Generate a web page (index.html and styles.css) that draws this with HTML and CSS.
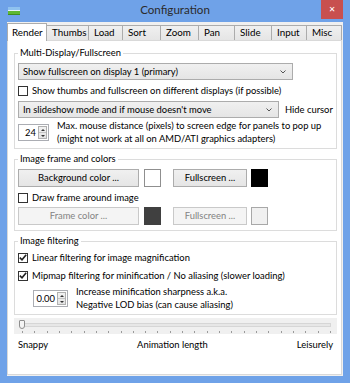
FILE: index.html
```html
<!DOCTYPE html>
<html lang="en">
<head>
    <meta charset="UTF-8">
    <title>Configuration</title>
    <link rel="stylesheet" href="styles.css">
</head>
<body>
    <div class="window">
        <div class="titlebar">
            <svg class="app-icon" width="12" height="8" viewBox="0 0 12 8">
                <rect x="0" y="0" width="12" height="4" fill="#8fc2ef"/>
                <rect x="0" y="3" width="12" height="1" fill="#e8f2fb"/>
                <rect x="0" y="4" width="12" height="4" fill="#5fb832"/>
                <rect x="0" y="7" width="12" height="1" fill="#3f8d1e"/>
            </svg>
            <div class="title">Configuration</div>
            <div class="close">&#x2715;</div>
        </div>

        <div class="client">
            <div class="tabs">
                <div class="tab active">Render</div>
                <div class="tab">Thumbs</div>
                <div class="tab">Load</div>
                <div class="tab">Sort</div>
                <div class="tab">Zoom</div>
                <div class="tab">Pan</div>
                <div class="tab">Slide</div>
                <div class="tab">Input</div>
                <div class="tab">Misc</div>
            </div>

            <div class="page">
                <!-- Multi display -->
                <fieldset class="group">
                    <legend>Multi-Display/Fullscreen</legend>
                    <div class="select select-wide">
                        <span>Show fullscreen on display 1 (primary)</span>
                        <svg class="chevron" width="6" height="4" viewBox="0 0 6 4"><path d="M0.5 0.5 L3 3 L5.5 0.5" fill="none" stroke="#555" stroke-width="1"/></svg>
                    </div>
                    <div class="check">
                        <span class="box"></span>
                        <span>Show thumbs and fullscreen on different displays (if possible)</span>
                    </div>
                    <div class="select-row">
                        <div class="select select-mid">
                            <span>In slideshow mode and if mouse doesn't move</span>
                            <svg class="chevron" width="6" height="4" viewBox="0 0 6 4"><path d="M0.5 0.5 L3 3 L5.5 0.5" fill="none" stroke="#555" stroke-width="1"/></svg>
                        </div>
                        <span class="select-after">Hide cursor</span>
                    </div>
                    <div class="spin-row">
                        <div class="spin">
                            <span class="spin-val">24</span>
                            <span class="spin-btns">
                                <span class="spin-up"></span>
                                <span class="spin-down"></span>
                            </span>
                        </div>
                        <div class="spin-text">
                            <p>Max. mouse distance (pixels) to screen edge for panels to pop up</p>
                            <p>(might not work at all on AMD/ATI graphics adapters)</p>
                        </div>
                    </div>
                </fieldset>

                <!-- Frame and colors -->
                <fieldset class="group group-colors">
                    <legend>Image frame and colors</legend>
                    <div class="btn-row">
                        <div class="btn btn-long">Background color ...</div>
                        <div class="swatch swatch-white"></div>
                        <div class="btn btn-short">Fullscreen ...</div>
                        <div class="swatch swatch-black"></div>
                    </div>
                    <div class="check">
                        <span class="box"></span>
                        <span>Draw frame around image</span>
                    </div>
                    <div class="btn-row">
                        <div class="btn btn-long disabled">Frame color ...</div>
                        <div class="swatch swatch-dark"></div>
                        <div class="btn btn-short disabled">Fullscreen ...</div>
                        <div class="swatch swatch-light"></div>
                    </div>
                </fieldset>

                <!-- Filtering -->
                <fieldset class="group">
                    <legend>Image filtering</legend>
                    <div class="check check-first">
                        <span class="box checked"><svg width="8" height="7" viewBox="0 0 8 7"><path d="M0.8 3.6 L3 5.8 L7.2 0.8" fill="none" stroke="#222" stroke-width="1.6"/></svg></span>
                        <span>Linear filtering for image magnification</span>
                    </div>
                    <div class="check check-second">
                        <span class="box checked"><svg width="8" height="7" viewBox="0 0 8 7"><path d="M0.8 3.6 L3 5.8 L7.2 0.8" fill="none" stroke="#222" stroke-width="1.6"/></svg></span>
                        <span>Mipmap filtering for minification / No aliasing (slower loading)</span>
                    </div>
                    <div class="spin-row spin-row-indent">
                        <div class="spin">
                            <span class="spin-val">0.00</span>
                            <span class="spin-btns">
                                <span class="spin-up"></span>
                                <span class="spin-down"></span>
                            </span>
                        </div>
                        <div class="spin-text">
                            <p>Increase minification sharpness a.k.a.</p>
                            <p>Negative LOD bias (can cause aliasing)</p>
                        </div>
                    </div>
                </fieldset>

                <!-- Animation slider -->
                <div class="slider">
                    <div class="track"></div>
                    <div class="thumb"></div>
                    <div class="ticks">
                        <span></span><span></span><span></span><span></span><span></span>
                        <span></span><span></span><span></span><span></span><span></span>
                        <span></span><span></span><span></span><span></span><span></span>
                        <span></span><span></span><span></span><span></span><span></span>
                        <span></span><span></span><span></span><span></span><span></span>
                        <span></span>
                    </div>
                </div>
                <div class="slider-labels">
                    <span>Snappy</span>
                    <span>Animation length</span>
                    <span>Leisurely</span>
                </div>
            </div>
        </div>
    </div>
</body>
</html>
```

FILE: styles.css
```css
body {
    margin: 0;
    font-family: "Segoe UI", Lato, "Noto Sans", sans-serif;
    font-size: 9.4px;
    color: #000;
}
.window {
    width: 350px;
    height: 383px;
    box-sizing: border-box;
    background: #6fa2e8;
    padding: 0 7px 7px 7px;
    display: flex;
    flex-direction: column;
}
.titlebar {
    height: 22px;
    display: grid;
    grid-template-columns: 1fr auto 1fr;
    align-items: start;
}
.app-icon {
    margin: 7px 0 0 1px;
}
.title {
    font-size: 11.6px;
    line-height: 20px;
    color: #2b2b2b;
}
.close {
    justify-self: end;
    width: 22px;
    height: 19px;
    background: #c8504f;
    color: #fff;
    font-family: "DejaVu Sans", sans-serif;
    font-size: 8px;
    font-weight: bold;
    line-height: 19px;
    text-align: center;
}
.client {
    flex: 1;
    background: #f0f0f0;
    padding: 0 1px 1px 0;
    display: flex;
    flex-direction: column;
}
.tabs {
    height: 18px;
    display: flex;
    align-items: flex-end;
}
.tab {
    box-sizing: border-box;
    height: 15px;
    line-height: 13px;
    padding-left: 5px;
    margin-right: -1px;
    border: 1px solid #acacac;
    border-bottom: none;
    background: linear-gradient(#f0f0f0, #e5e5e5);
    white-space: nowrap;
    font-size: 9.8px;
}
.tab.active {
    height: 18px;
    margin-bottom: -1px;
    line-height: 17px;
    padding-left: 4px;
    background: #fff;
    position: relative;
    z-index: 1;
}
.tab:nth-child(1) { width: 40px; }
.tab:nth-child(2) { width: 43px; }
.tab:nth-child(3) { width: 35px; }
.tab:nth-child(4) { width: 39px; }
.tab:nth-child(5) { width: 39px; }
.tab:nth-child(6) { width: 37px; }
.tab:nth-child(7) { width: 38px; }
.tab:nth-child(8) { width: 36px; }
.tab:nth-child(9) { width: 36px; }
.page {
    flex: 1;
    min-width: 0;
    background: #fff;
    border: 1px solid #d9d9d9;
    padding: 5px 4px 0 6px;
}
.group {
    min-width: 0;
    margin: 0 0 3px 0;
    padding: 0 3px 3px 3px;
    border: 1px solid #dcdcdc;
}
.group-colors {
    padding-bottom: 5px;
}
.group legend {
    padding: 0 2px;
    line-height: 14px;
}
.select {
    box-sizing: border-box;
    height: 17px;
    margin-top: 3px;
    padding: 0 6px 0 4px;
    border: 1px solid #acacac;
    background: linear-gradient(#f0f0f0, #e5e5e5);
    display: flex;
    align-items: center;
    justify-content: space-between;
}
.select-wide { width: 275px; }
.select-mid { width: 261px; flex: none; }
.select-row {
    display: flex;
    align-items: center;
    margin-top: 4px;
}
.select-row .select { margin-top: 0; }
.select-after { margin-left: 6px; white-space: nowrap; }
.check {
    display: flex;
    align-items: center;
    height: 13px;
    margin-top: 4px;
}
.check-first { margin-top: 3px; }
.check-second { margin-top: 5px; }
.box {
    box-sizing: border-box;
    flex: none;
    width: 10px;
    height: 10px;
    border: 1px solid #333;
    background: #fff;
    margin-right: 4px;
    display: flex;
    align-items: center;
    justify-content: center;
}
.spin-row {
    display: grid;
    grid-template-columns: 31px 1fr;
    column-gap: 8px;
    align-items: center;
    margin-top: 2px;
    height: 25px;
}
.spin-row-indent {
    grid-template-columns: 35px 1fr;
    padding-left: 15px;
    margin-top: 4px;
}
.spin {
    box-sizing: border-box;
    height: 17px;
    border: 1px solid #abadb3;
    display: flex;
    align-items: center;
    justify-content: flex-end;
    padding: 1px;
}
.spin-val {
    margin-right: 2px;
}
.spin-btns {
    width: 9px;
    height: 13px;
    display: flex;
    flex-direction: column;
    border: 1px solid #b0b0b0;
    box-sizing: border-box;
    background: linear-gradient(#f2f2f2, #e3e3e3);
}
.spin-up, .spin-down {
    flex: 1;
    position: relative;
}
.spin-up {
    border-bottom: 1px solid #c4c4c4;
}
.spin-up::after, .spin-down::after {
    content: "";
    position: absolute;
    left: 1.5px;
    top: 1.5px;
    border-left: 2px solid transparent;
    border-right: 2px solid transparent;
}
.spin-up::after { border-bottom: 2px solid #333; }
.spin-down::after { border-top: 2px solid #333; }
.spin-text {
    line-height: 12.5px;
    white-space: nowrap;
}
.spin-text p {
    margin: 0;
}
.btn-row {
    display: flex;
    align-items: center;
    margin-top: 3px;
}
.btn {
    box-sizing: border-box;
    height: 18px;
    line-height: 16px;
    text-align: center;
    border: 1px solid #acacac;
    background: linear-gradient(#f0f0f0, #e5e5e5);
}
.btn.disabled {
    color: #838383;
    border-color: #c9c9c9;
    background: #f4f4f4;
}
.btn-long { width: 121px; }
.btn-short { width: 74px; margin-left: 12px; }
.swatch {
    box-sizing: border-box;
    width: 17px;
    height: 18px;
    margin-left: 5px;
    border: 1px solid #8f8f8f;
}
.swatch-white { background: #fff; }
.swatch-black { background: #000; border-color: #000; margin-left: 4px; }
.swatch-dark { background: #404040; border-color: #404040; }
.swatch-light { background: #f0f0f0; border-color: #a8a8a8; margin-left: 4px; }
.slider {
    position: relative;
    height: 16px;
    margin-top: 2px;
    background: #f0f0f0;
}
.track {
    position: absolute;
    left: 8px;
    right: 6px;
    top: 5px;
    height: 2px;
    background: #e7e7e7;
    border: 1px solid #d6d6d6;
}
.thumb {
    position: absolute;
    left: 5px;
    top: 2px;
    width: 6px;
    height: 9px;
    box-sizing: border-box;
    border: 1px solid #8e8e8e;
    border-radius: 1px 1px 3px 3px;
    background: #f4f4f4;
}
.ticks {
    position: absolute;
    left: 8px;
    right: 6px;
    top: 13px;
    display: flex;
    justify-content: space-between;
}
.ticks span {
    width: 1px;
    height: 2px;
    background: #9a9a9a;
}
.slider-labels {
    display: flex;
    justify-content: space-between;
    padding: 5px 4px 0 4px;
}
```
